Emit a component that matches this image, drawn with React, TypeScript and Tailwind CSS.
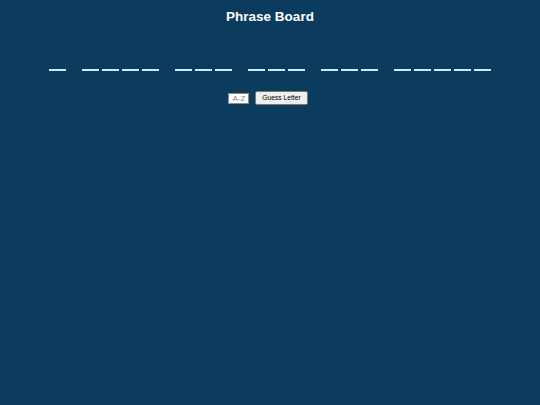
const phrase = ["A", "WORD", "THE", "AND", "FOR", "THING"];

function Blank() {
  return <span className="block h-[12px] w-[17px] border-b-2 border-[#cfe9f7]" />;
}

export default function App() {
  return (
    <div className="flex min-h-screen flex-col items-center bg-[#0b3c5d] font-['Liberation_Sans',Arial,sans-serif]">
      <h1 className="mt-[9px] text-[13.5px] font-bold leading-[16px] text-white">Phrase Board</h1>

      <div className="mt-[34px] flex gap-4">
        {phrase.map((word, i) => (
          <div key={i} className="flex gap-[3px]">
            {word.split("").map((_, j) => (
              <Blank key={j} />
            ))}
          </div>
        ))}
      </div>

      <div className="mt-[20px] flex items-center gap-[6px] pr-[4px]">
        <input
          type="text"
          maxLength={1}
          placeholder="A-Z"
          className="h-[11px] w-[21px] border border-[#8a8a8a] bg-white p-0 text-center text-[8px] leading-none text-black outline-none placeholder:text-[#858585]"
        />
        <button className="h-[14px] rounded-[2px] border border-[#767676] bg-[#efefef] px-[6px] text-[6.7px] leading-none text-black">
          Guess Letter
        </button>
      </div>
    </div>
  );
}
